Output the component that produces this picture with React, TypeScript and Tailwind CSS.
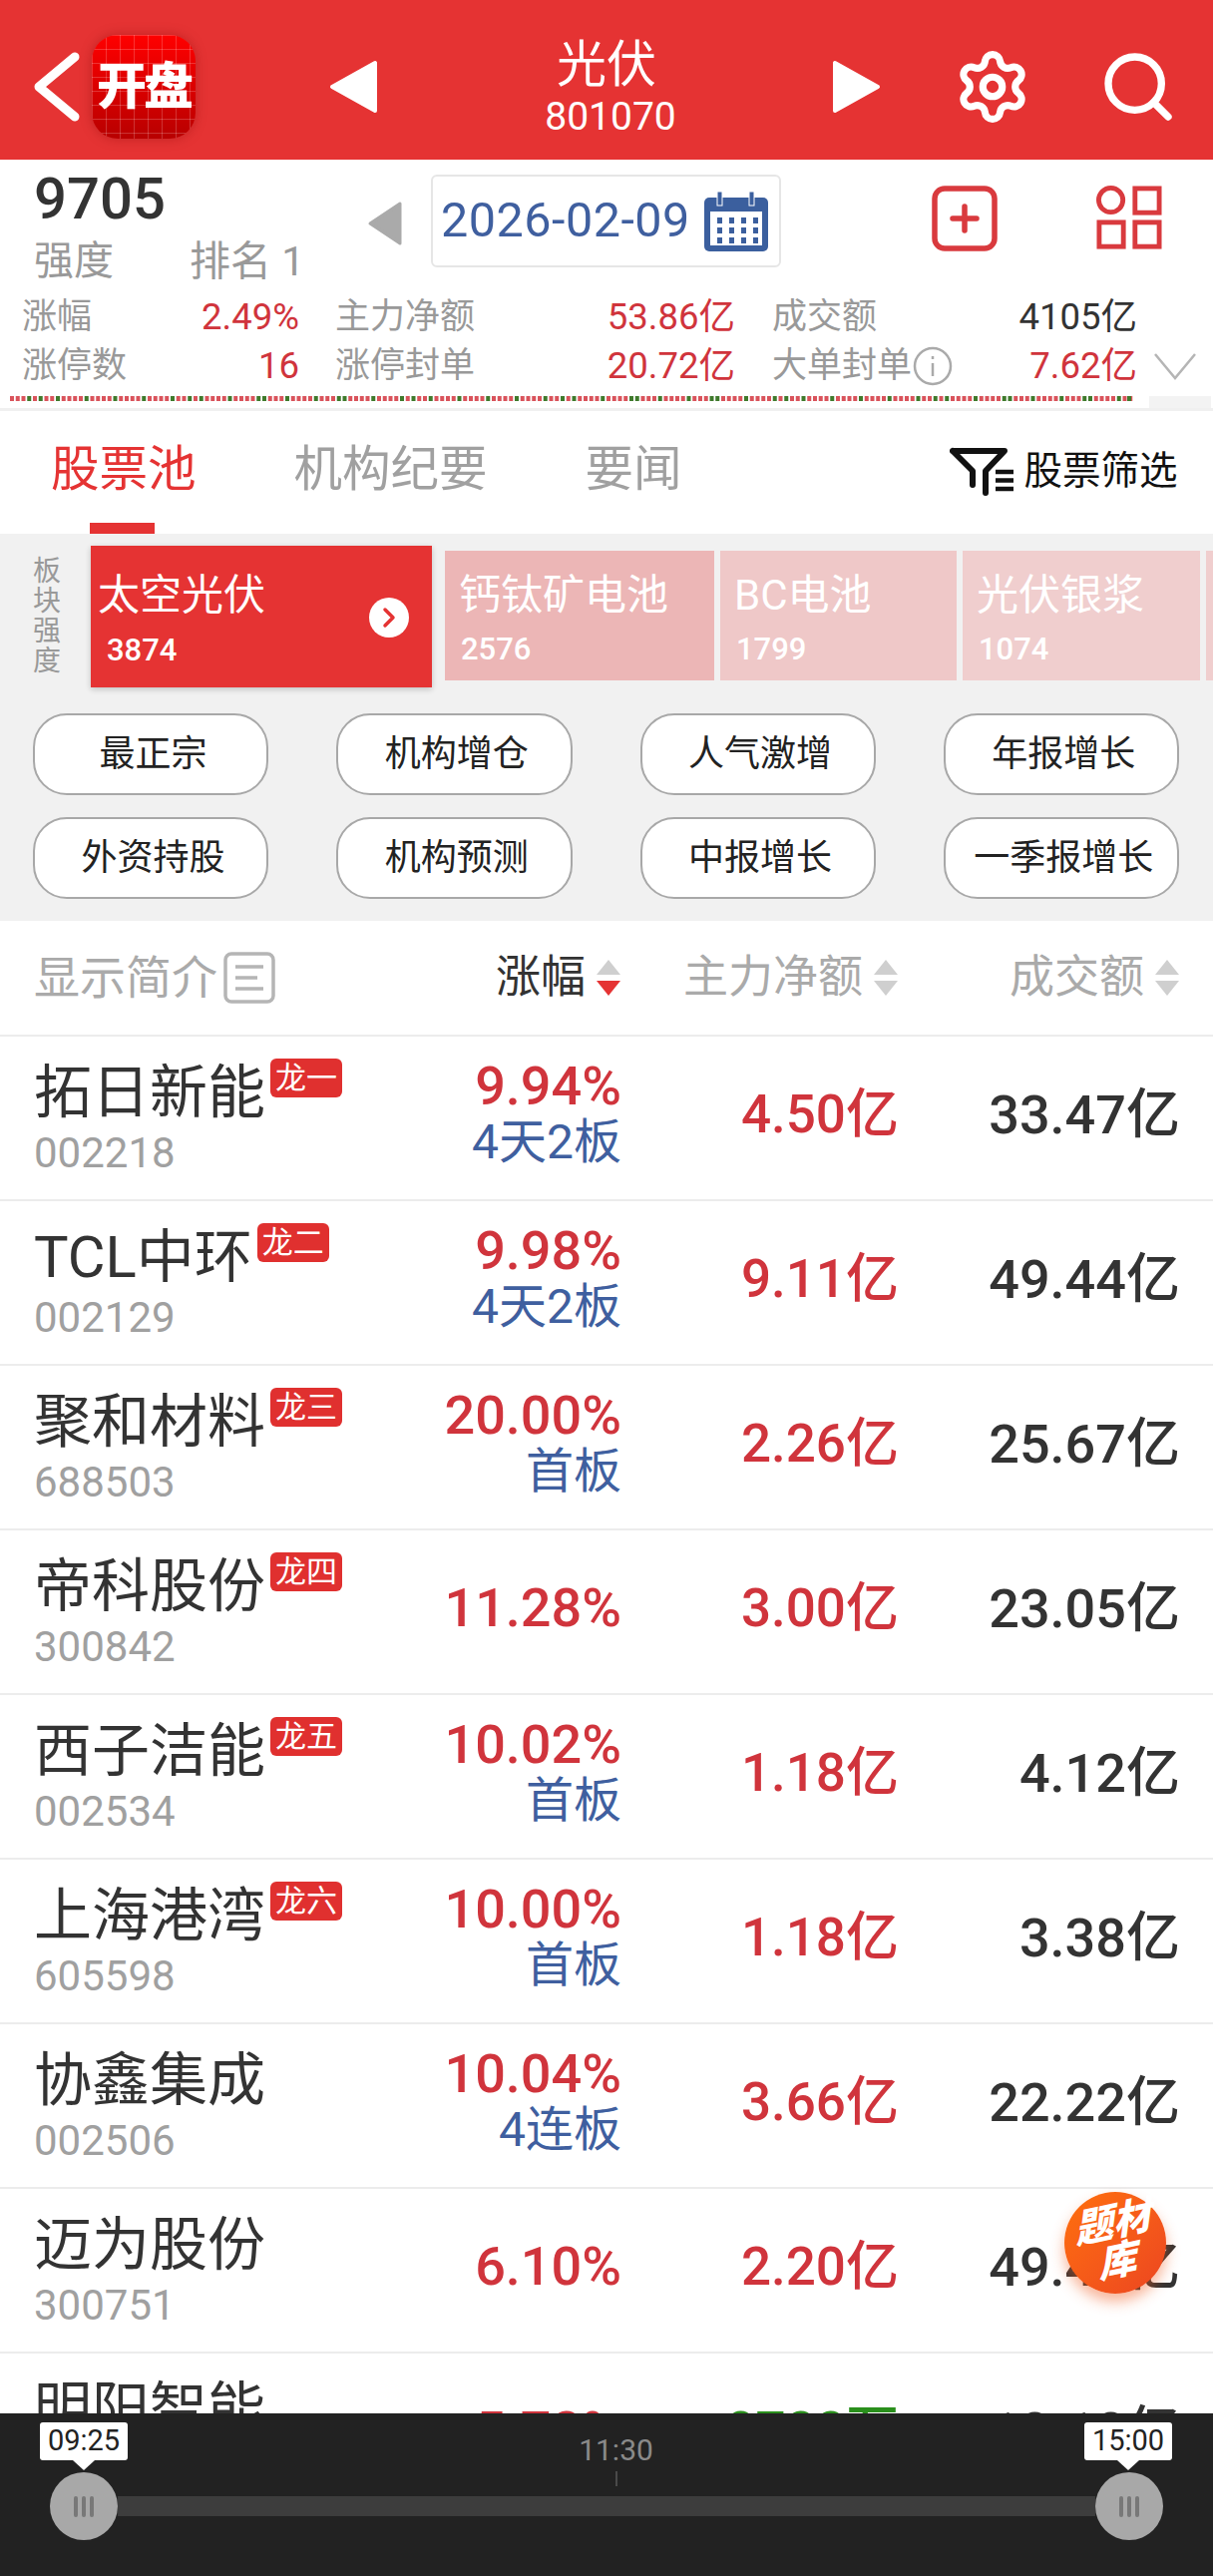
import { Settings, Search } from 'lucide-react';

const FONT = "font-['Roboto','Noto_Sans_CJK_SC',sans-serif]";

const stocks = [
  { name: '拓日新能', code: '002218', tag: '龙一', pct: '9.94%', note: '4天2板', net: '4.50亿', vol: '33.47亿' },
  { name: 'TCL中环', code: '002129', tag: '龙二', pct: '9.98%', note: '4天2板', net: '9.11亿', vol: '49.44亿' },
  { name: '聚和材料', code: '688503', tag: '龙三', pct: '20.00%', note: '首板', net: '2.26亿', vol: '25.67亿' },
  { name: '帝科股份', code: '300842', tag: '龙四', pct: '11.28%', note: '', net: '3.00亿', vol: '23.05亿' },
  { name: '西子洁能', code: '002534', tag: '龙五', pct: '10.02%', note: '首板', net: '1.18亿', vol: '4.12亿' },
  { name: '上海港湾', code: '605598', tag: '龙六', pct: '10.00%', note: '首板', net: '1.18亿', vol: '3.38亿' },
  { name: '协鑫集成', code: '002506', tag: '', pct: '10.04%', note: '4连板', net: '3.66亿', vol: '22.22亿' },
  { name: '迈为股份', code: '300751', tag: '', pct: '6.10%', note: '', net: '2.20亿', vol: '49.46亿' },
  { name: '明阳智能', code: '601615', tag: '', pct: '5.72%', note: '', net: '8722万', vol: '18.18亿', green: true },
];

const pills = ['最正宗', '机构增仓', '人气激增', '年报增长', '外资持股', '机构预测', '中报增长', '一季报增长'];

const sectors = [
  { name: '钙钛矿电池', val: '2576', cls: 'w-[270px] bg-[#ecb6b6]' },
  { name: 'BC电池', val: '1799', cls: 'w-[237px] bg-[#efc8c8]' },
  { name: '光伏银浆', val: '1074', cls: 'w-[238px] bg-[#f0cece]' },
];

// tick strip under the stats, mostly red with some green
const ticks = Array.from({ length: 196 }, (_, i) => ((i * 7) % 5 === 1 || (i * 11) % 13 === 3 ? '#3f7a2c' : '#d9535b'));

const SortArrows = ({ active }: { active?: boolean }) => (
  <svg width="26" height="40" viewBox="0 0 26 40" className="ml-[10px] shrink-0">
    <path d="M13 2 L25 17 H1 Z" fill="#cfcfcf" />
    <path d="M13 38 L25 23 H1 Z" fill={active ? '#e53333' : '#cfcfcf'} />
  </svg>
);

const Grabber = () => (
  <div className="flex h-[68px] w-[68px] shrink-0 items-center justify-center gap-[4px] rounded-full bg-[#a8a8a8]">
    <span className="h-[21px] w-[4px] rounded-full bg-[#787878]" />
    <span className="h-[21px] w-[4px] rounded-full bg-[#787878]" />
    <span className="h-[21px] w-[4px] rounded-full bg-[#787878]" />
  </div>
);

const TimeTip = ({ text }: { text: string }) => (
  <div className="relative flex h-[38px] w-[88px] shrink-0 items-center justify-center rounded-[3px] bg-white text-[29px] text-[#222]">
    {text}
    <span className="absolute left-1/2 top-full -ml-[11px] border-x-[11px] border-t-[10px] border-x-transparent border-t-white" />
  </div>
);

const Stat = ({ label, value, w, color }: { label: React.ReactNode; value: string; w: string; color: string }) => (
  <div className={`flex items-center justify-between ${w}`}>
    <span className="flex items-center text-[#999]">{label}</span>
    <span className={`text-[36.5px] ${color}`}>{value}</span>
  </div>
);

export default function App() {
  return (
    <div className={`relative flex h-[2582px] w-[1216px] flex-col overflow-hidden bg-white ${FONT}`}>
      {/* top bar */}
      <header className="flex h-[160px] shrink-0 items-center bg-[#e53333] pt-[13px] text-white">
        <svg width="56" height="76" viewBox="0 0 56 76" className="ml-[29px] shrink-0" fill="none" stroke="white" strokeWidth="9" strokeLinecap="round" strokeLinejoin="round">
          <path d="M46 8 L10 38 L46 68" />
        </svg>
        <div className="relative ml-[7px] flex h-[104px] w-[104px] shrink-0 items-center justify-center overflow-hidden rounded-[26px] bg-gradient-to-b from-[#ff0000] to-[#b80000] text-[50px] font-black leading-none shadow-[0_0_12px_rgba(120,0,0,0.35)]">
          <div className="absolute inset-0 bg-[linear-gradient(rgba(255,255,255,0.2)_1px,transparent_1px),linear-gradient(90deg,rgba(255,255,255,0.2)_1px,transparent_1px)] bg-[size:14px_14px]" />
          <span className="relative tracking-[-3px]">开盘</span>
        </div>
        <svg width="50" height="54" viewBox="0 0 50 54" className="ml-[134px] shrink-0" fill="white" stroke="white" strokeWidth="4" strokeLinejoin="round">
          <path d="M46 3 V51 L3 27 Z" />
        </svg>
        <div className="ml-[103px] flex w-[250px] shrink-0 flex-col items-center">
          <span className="text-[50px] leading-[60px]">光伏</span>
          <span className="ml-[8px] text-[39px] leading-[44px]">801070</span>
        </div>
        <svg width="50" height="54" viewBox="0 0 50 54" className="ml-[100px] shrink-0" fill="white" stroke="white" strokeWidth="4" strokeLinejoin="round">
          <path d="M4 3 V51 L47 27 Z" />
        </svg>
        <Settings size={78} strokeWidth={2.2} className="ml-[73px] shrink-0" />
        <Search size={80} strokeWidth={2.2} className="ml-[67px] shrink-0" />
      </header>

      {/* summary */}
      <section className="h-[249px] shrink-0">
        <div className="flex h-[130px]">
          <div className="ml-[34px] w-[330px] shrink-0">
            <div className="mt-[10px] text-[58px] font-medium leading-[58px] text-[#333]">9705</div>
            <div className="mt-[9px] flex text-[40px] leading-[50px] text-[#999]">
              <span className="w-[156px]">强度</span>
              <span className="text-[41px]">排名 1</span>
            </div>
          </div>
          <svg width="36" height="46" viewBox="0 0 36 46" className="ml-[4px] mt-[41px] shrink-0" fill="#aaaaaa" stroke="#aaaaaa" strokeWidth="3" strokeLinejoin="round">
            <path d="M33 3 V43 L3 23 Z" />
          </svg>
          <div className="ml-[28px] mt-[15px] flex h-[93px] w-[351px] shrink-0 items-center rounded-[6px] border-2 border-[#e6e6e6] pl-[8px]">
            <span className="text-[48.5px] tracking-[0.5px] text-[#3f5f9f]">2026-02-09</span>
            <svg width="64" height="60" viewBox="0 0 64 60" className="ml-[14px] shrink-0">
              <rect x="0" y="6" width="64" height="54" rx="5" fill="#3b5f9e" />
              <rect x="13" y="0" width="5" height="14" fill="#3b5f9e" stroke="white" strokeWidth="1" />
              <rect x="45" y="0" width="5" height="14" fill="#3b5f9e" stroke="white" strokeWidth="1" />
              <rect x="6" y="20" width="52" height="34" fill="white" />
              {[26, 36, 46].map((y) =>
                [13, 25, 37, 49].map((x) => <rect key={`${x}-${y}`} x={x} y={y} width="5" height="6" fill="#3b5f9e" />),
              )}
            </svg>
          </div>
          <svg width="66" height="66" viewBox="0 0 66 66" className="ml-[151px] mt-[26px] shrink-0" fill="none" stroke="#d93a3e" strokeWidth="5.5">
            <rect x="3" y="3" width="60" height="60" rx="10" />
            <path d="M33 21 V45 M21 33 H45" strokeLinecap="round" />
          </svg>
          <svg width="66" height="66" viewBox="0 0 68 68" className="ml-[99px] mt-[26px] shrink-0" fill="none" stroke="#d93a3e" strokeWidth="5">
            <circle cx="15" cy="15" r="12.5" />
            <rect x="40" y="3" width="25" height="25" />
            <rect x="3" y="38" width="25" height="25" />
            <rect x="40" y="38" width="25" height="25" />
          </svg>
        </div>
        <div className="ml-[22px] mt-[3px] text-[35px] leading-[49px]">
          <div className="flex">
            <Stat label="涨幅" value="2.49%" w="w-[278px]" color="text-[#d0343c]" />
            <Stat label="主力净额" value="53.86亿" w="ml-[36px] w-[401px]" color="text-[#d0343c]" />
            <Stat label="成交额" value="4105亿" w="ml-[37px] w-[366px]" color="text-[#333]" />
          </div>
          <div className="flex">
            <Stat label="涨停数" value="16" w="w-[278px]" color="text-[#d0343c]" />
            <Stat label="涨停封单" value="20.72亿" w="ml-[36px] w-[401px]" color="text-[#d0343c]" />
            <Stat
              label={
                <>
                  大单封单
                  <svg width="40" height="40" viewBox="0 0 40 40" className="ml-[1px]" fill="none" stroke="#aaaaaa" strokeWidth="2.5">
                    <circle cx="20" cy="20" r="18" />
                    <path d="M20 17 V30 M20 10 V13" />
                  </svg>
                </>
              }
              value="7.62亿"
              w="ml-[37px] w-[366px]"
              color="text-[#d0343c]"
            />
            <svg width="44" height="30" viewBox="0 0 44 30" className="ml-[16px] mt-[10px] shrink-0" fill="none" stroke="#b5b5b5" strokeWidth="2.5">
              <path d="M2 3 L22 27 L42 3" />
            </svg>
          </div>
        </div>
        <div className="mt-[6px] flex items-start">
          <svg width="1130" height="5" viewBox="0 0 1130 5" className="ml-[10px] shrink-0">
            {ticks.map((c, i) => (
              <rect key={i} x={i * 5.75} y="0" width="4" height="5" fill={c} />
            ))}
            <rect x="1120" y="0" width="4" height="5" fill="#3f7a2c" />
          </svg>
          <div className="ml-[12px] h-[13px] w-[62px] shrink-0 bg-[#f3f3f3]" />
        </div>
      </section>

      <div className="h-[3px] shrink-0 bg-[#f0f0f0]" />

      {/* tabs */}
      <nav className="relative flex h-[123px] shrink-0 items-start text-[48.5px] leading-[60px] text-[#a0a0a0]">
        <div className="relative ml-[51px] mt-[29px] text-[#e53333]">股票池</div>
        <div className="ml-[98px] mt-[29px]">机构纪要</div>
        <div className="ml-[98px] mt-[29px]">要闻</div>
        <svg width="64" height="50" viewBox="0 0 64 50" className="ml-[268px] mt-[36px] shrink-0" fill="none" stroke="#111" strokeWidth="6" strokeLinecap="round" strokeLinejoin="round">
          <path d="M3 4 H55 L36 24 V46 M3 4 L23 24 V38" />
          <path d="M46 25 H64 M46 33.5 H64 M46 42 H64" strokeLinecap="butt" strokeWidth="4.5" />
        </svg>
        <div className="ml-[11px] mt-[35px] text-[38.5px] leading-[50px] text-[#111]">股票筛选</div>
        <span className="absolute bottom-0 left-[90px] h-[11px] w-[65px] bg-[#e53333]" />
      </nav>

      {/* sectors and filters */}
      <section className="h-[388px] shrink-0 overflow-hidden bg-[#f1f1f1]">
        <div className="flex h-[154px] items-start">
          <div className="ml-[33px] mt-[23px] w-[28px] text-[28px] leading-[30px] text-[#999]">板块强度</div>
          <div className="relative ml-[30px] mt-[12px] flex h-[142px] w-[342px] shrink-0 flex-col bg-[#e53333] pl-[7px] text-white shadow-[0_2px_6px_rgba(0,0,0,0.2)]">
            <span className="mt-[25px] text-[42px] leading-[50px]">太空光伏</span>
            <span className="ml-[9px] mt-[12px] text-[31px] font-medium leading-[36px]">3874</span>
            <span className="absolute right-[23px] top-[52px] flex h-[40px] w-[40px] items-center justify-center rounded-full bg-white">
              <svg width="14" height="22" viewBox="0 0 14 22" fill="none" stroke="#e53333" strokeWidth="3.5" strokeLinecap="round" strokeLinejoin="round">
                <path d="M3 3 L11 11 L3 19" />
              </svg>
            </span>
          </div>
          <div className="ml-[13px] mt-[17px] flex shrink-0 gap-[6px] text-white">
            {sectors.map((s) => (
              <div key={s.name} className={`flex h-[130px] shrink-0 flex-col pl-[14px] ${s.cls}`}>
                <span className="mt-[20px] whitespace-nowrap text-[42px] leading-[50px]">{s.name}</span>
                <span className="ml-[2px] mt-[11px] text-[31px] font-medium leading-[36px]">{s.val}</span>
              </div>
            ))}
            <div className="h-[130px] w-[20px] shrink-0 bg-[#f0cece]" />
          </div>
        </div>
        <div className="ml-[33px] mt-[26px] grid w-[1149px] grid-cols-4 gap-x-[68px] gap-y-[22px]">
          {pills.map((p) => (
            <div key={p} className="flex h-[82px] items-center justify-center rounded-[34px] border-2 border-[#a8a8a8] bg-white pl-[5px] text-[36px] text-[#222]">
              {p}
            </div>
          ))}
        </div>
      </section>

      {/* table head */}
      <div className="flex h-[116px] shrink-0 items-center border-b-2 border-[#ececec] text-[45px] text-[#aaa]">
        <div className="ml-[34px] flex w-[380px] shrink-0 items-center text-[46px]">
          显示简介
          <svg width="52" height="52" viewBox="0 0 52 52" className="ml-[6px] shrink-0" fill="none" stroke="#b5b5b5" strokeWidth="3.5">
            <rect x="2" y="2" width="48" height="48" rx="6" />
            <path d="M12 15 H40 M12 26 H34 M12 37 H40" />
          </svg>
        </div>
        <div className="flex w-[209px] shrink-0 items-center justify-end text-[#333]">
          涨幅
          <SortArrows active />
        </div>
        <div className="flex w-[278px] shrink-0 items-center justify-end">
          主力净额
          <SortArrows />
        </div>
        <div className="flex w-[282px] shrink-0 items-center justify-end">
          成交额
          <SortArrows />
        </div>
      </div>

      {/* rows */}
      <div className="min-h-0 flex-1 overflow-hidden">
        {stocks.map((s) => (
          <div key={s.code} className="flex h-[165px] items-center border-b-2 border-[#ececec]">
            <div className="ml-[34px] w-[380px] shrink-0">
              <div className="flex items-start">
                <span className="text-[58px] leading-[68px] text-[#333]">{s.name}</span>
                {s.tag && (
                  <span className="ml-[5px] flex h-[39px] w-[72px] items-center justify-center rounded-[6px] bg-[#e0302f] text-[31px] leading-none text-white">
                    {s.tag}
                  </span>
                )}
              </div>
              <div className="mt-[2px] text-[42px] leading-[50px] text-[#a0a0a0]">{s.code}</div>
            </div>
            <div className="w-[209px] shrink-0 pb-[7px] text-right">
              <div className="text-[54px] font-medium leading-[56px] text-[#d0343c]">{s.pct}</div>
              {s.note && <div className="text-[48px] leading-[56px] text-[#3f5f9f]">{s.note}</div>}
            </div>
            <div className={`w-[278px] shrink-0 pb-[6px] text-right text-[53px] font-medium ${s.green ? 'text-[#2a8f1c]' : 'text-[#d0343c]'}`}>{s.net}</div>
            <div className="w-[282px] shrink-0 pb-[6px] text-right text-[54px] font-medium text-[#333]">{s.vol}</div>
          </div>
        ))}
      </div>

      {/* time range */}
      <footer className="relative z-10 flex h-[163px] shrink-0 flex-col bg-[#222222]">
        <div className="flex h-[59px] items-start justify-between pl-[40px] pr-[41px] pt-[9px]">
          <TimeTip text="09:25" />
          <div className="ml-[20px] mt-[11px] flex flex-col items-center text-[30px] leading-[34px] text-[#8a8a8a]">
            11:30
            <span className="mt-[4px] h-[15px] w-[2px] bg-[#4a4a4a]" />
          </div>
          <TimeTip text="15:00" />
        </div>
        <div className="ml-[50px] mr-[50px] flex items-center">
          <Grabber />
          <div className="h-[20px] flex-1 bg-[#3d3d3d]" />
          <Grabber />
        </div>
      </footer>

      {/* floating shortcut */}
      <div className="absolute left-[1067px] top-[2197px] z-20 flex h-[102px] w-[102px] items-center justify-center rounded-full bg-gradient-to-br from-[#ff6f0a] to-[#ec4520] shadow-[0_8px_14px_rgba(240,90,30,0.45)]">
        <div className="flex -rotate-12 -skew-x-6 flex-col items-center text-[39px] font-black italic leading-[39px] text-white">
          <span>题材</span>
          <span>库</span>
        </div>
      </div>
    </div>
  );
}
